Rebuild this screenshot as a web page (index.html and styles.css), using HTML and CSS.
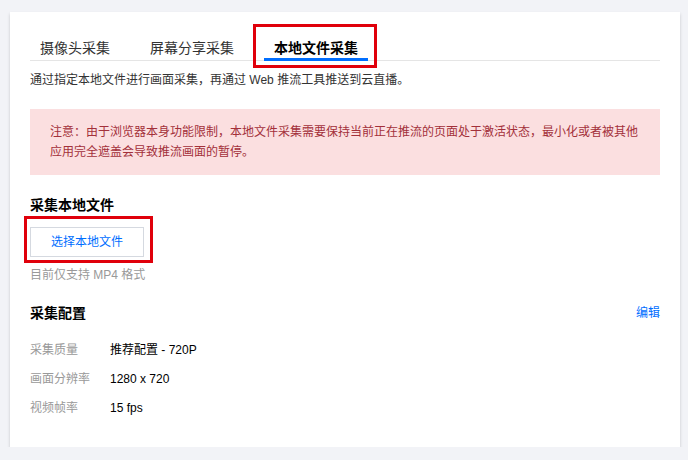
FILE: index.html
```html
<!DOCTYPE html>
<html lang="zh-CN">
<head>
<meta charset="utf-8">
<title>本地文件采集</title>
<link rel="stylesheet" href="styles.css">
</head>
<body>
<div class="card">
  <div class="tabs">
    <div class="tab">摄像头采集</div>
    <div class="tab">屏幕分享采集</div>
    <div class="tab active">本地文件采集<span class="mark mark-tab"></span></div>
  </div>
  <p class="desc">通过指定本地文件进行画面采集，再通过 Web 推流工具推送到云直播。</p>
  <div class="alert">注意：由于浏览器本身功能限制，本地文件采集需要保持当前正在推流的页面处于激活状态，最小化或者被其他应用完全遮盖会导致推流画面的暂停。</div>
  <h3 class="section-title">采集本地文件</h3>
  <div class="btn-wrap">
    <button class="btn">选择本地文件</button>
    <span class="mark mark-btn"></span>
  </div>
  <p class="hint">目前仅支持 MP4 格式</p>
  <div class="config-head">
    <h3 class="section-title">采集配置</h3>
    <a class="link">编辑</a>
  </div>
  <div class="rows">
    <div class="row"><span class="label">采集质量</span><span class="value">推荐配置 - 720P</span></div>
    <div class="row"><span class="label">画面分辨率</span><span class="value">1280 x 720</span></div>
    <div class="row"><span class="label">视频帧率</span><span class="value">15 fps</span></div>
  </div>
</div>
</body>
</html>
```
FILE: styles.css
```css
* { box-sizing: border-box; }
html, body { margin: 0; }
body {
  background: #f2f3f7;
  padding: 12px 8px 0 10px;
  font-family: "Liberation Sans", "Noto Sans CJK SC", sans-serif;
  font-size: 12px;
  color: #333;
}
.card {
  width: 670px;
  background: #fff;
  padding: 20px 20px 29px;
  box-shadow: 0 2px 3px rgba(0, 0, 0, 0.18);
}
.tabs {
  display: flex;
  gap: 20px;
  border-bottom: 1px solid #e5e5e5;
}
.tab {
  position: relative;
  padding: 6px 10px 0;
  font-size: 14px;
  line-height: 20px;
  color: #333;
  border-bottom: 3px solid transparent;
  margin-bottom: -1px;
}
.tab.active {
  font-weight: bold;
  color: #000;
  border-bottom-color: #006eff;
}
.mark {
  position: absolute;
  border: 3px solid #e0000b;
  pointer-events: none;
}
.mark-tab { left: -11px; right: -9px; top: -8px; bottom: -10px; }
.desc {
  margin: 9px 0 0;
  line-height: 20px;
  color: #333;
}
.alert {
  margin-top: 19px;
  background: #fbdfe0;
  color: #a3303a;
  padding: 13px 20px;
  line-height: 20px;
}
.section-title {
  margin: 0;
  font-size: 14px;
  line-height: 20px;
  font-weight: bold;
  color: #000;
}
.alert + .section-title { margin-top: 20px; }
.btn-wrap {
  position: relative;
  display: flex;
  width: max-content;
  margin-top: 12px;
}
.btn {
  display: block;
  height: 30px;
  padding: 0 20px;
  border: 1px solid #d5d9e0;
  background: #fff;
  color: #006eff;
  font: inherit;
  font-size: 12px;
  line-height: 28px;
}
.mark-btn { left: -6px; right: -9px; top: -11px; bottom: -6px; }
.hint {
  margin: 8px 0 0;
  line-height: 20px;
  color: #999;
}
.config-head {
  margin-top: 18px;
  display: flex;
  justify-content: space-between;
  align-items: center;
}
.link {
  color: #006eff;
  line-height: 20px;
}
.rows {
  margin-top: 17px;
  display: flex;
  flex-direction: column;
  gap: 9px;
}
.row {
  display: flex;
  line-height: 20px;
}
.label {
  width: 80px;
  color: #999;
}
.value { color: #000; }
```
